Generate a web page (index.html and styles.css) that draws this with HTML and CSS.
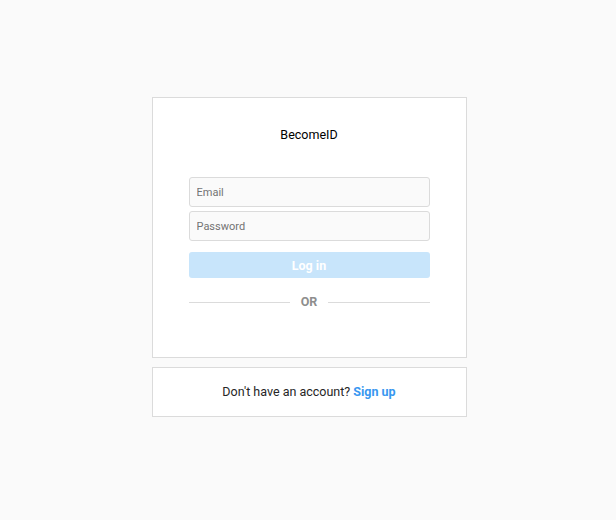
FILE: index.html
```html
<!DOCTYPE html>
<html>
<head>
<meta charset="utf-8">
<link rel="stylesheet" href="styles.css">
</head>
<body>
<main class="page">
  <section class="card login">
    <h1 class="brand">BecomeID</h1>
    <form class="form">
      <input class="field" type="text" placeholder="Email">
      <input class="field" type="password" placeholder="Password">
      <button class="btn" type="button">Log in</button>
    </form>
    <div class="divider"><span class="line"></span><span class="or">OR</span><span class="line"></span></div>
  </section>
  <section class="card signup">
    <p class="signup-text">Don't have an account? <a class="link" href="#">Sign up</a></p>
  </section>
</main>
</body>
</html>
```
FILE: styles.css
```css
html, body {
  margin: 0;
  padding: 0;
  background: #fafafa;
  font-family: Roboto, "Liberation Sans", sans-serif;
}
.page {
  display: flex;
  flex-direction: column;
  align-items: center;
  padding-top: 97px;
  padding-left: 2px;
  gap: 9px;
}
.card {
  box-sizing: border-box;
  width: 315px;
  background: #fff;
  border: 1px solid #dbdbdb;
}
.login {
  height: 261px;
  padding: 0 36px;
}
.brand {
  margin: 27px 0 0;
  font-size: 12.5px;
  font-weight: 400;
  text-align: center;
  color: #000;
  line-height: 20px;
}
.form {
  display: flex;
  flex-direction: column;
  gap: 4px;
  margin-top: 32px;
}
.field {
  box-sizing: border-box;
  height: 30px;
  width: 100%;
  border: 1px solid #dbdbdb;
  border-radius: 3px;
  background: #fafafa;
  padding: 0 7px;
  font-family: Roboto, "Liberation Sans", sans-serif;
  font-size: 11px;
  color: #262626;
}
.field::placeholder { color: #737373; }
.btn {
  margin-top: 7px;
  height: 26px;
  border: none;
  border-radius: 3px;
  background: #c8e5fb;
  color: #fff;
  font-family: Roboto, "Liberation Sans", sans-serif;
  font-weight: 700;
  font-size: 12.5px;
}
.divider {
  display: flex;
  align-items: center;
  margin-top: 16px;
  gap: 11px;
}
.line {
  flex: 1;
  height: 1px;
  background: #dbdbdb;
}
.or {
  font-size: 12.5px;
  font-weight: 700;
  color: #8e8e8e;
  line-height: 16px;
}
.signup {
  height: 50px;
  padding-bottom: 1px;
  display: flex;
  align-items: center;
  justify-content: center;
}
.signup-text {
  margin: 0;
  font-size: 12.5px;
  color: #262626;
}
.link {
  color: #3897f0;
  font-weight: 700;
  text-decoration: none;
}
```
